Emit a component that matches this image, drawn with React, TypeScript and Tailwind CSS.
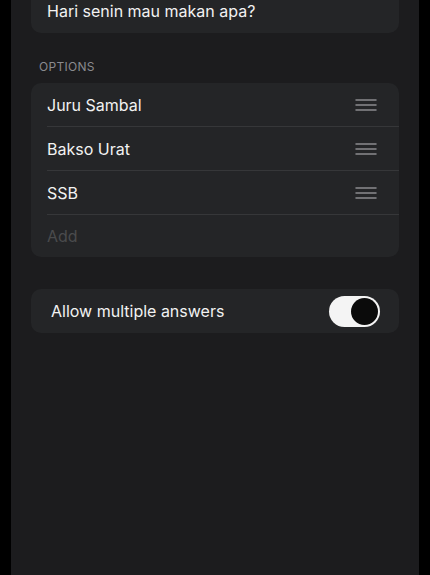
import React from 'react';

const options = ['Juru Sambal', 'Bakso Urat', 'SSB'];

const DragHandle = () => (
  <svg width="22" height="12" viewBox="0 0 22 12" className="shrink-0">
    <g stroke="#8a8a8e" strokeWidth="1.5" strokeLinecap="round">
      <line x1="1" y1="1" x2="21" y2="1" />
      <line x1="1" y1="6" x2="21" y2="6" />
      <line x1="1" y1="11" x2="21" y2="11" />
    </g>
  </svg>
);

export default function App() {
  return (
    <div
      className="h-[575px] w-[430px] overflow-hidden bg-black"
      style={{ fontFamily: 'Inter, "Noto Sans", sans-serif' }}
    >
      <div className="mx-[11px] h-full bg-[#1c1c1e] px-5 overflow-hidden">
        {/* Question */}
        <div className="-mt-[11px] flex h-[44px] items-center rounded-[10px] bg-[#242527] px-4">
          <span className="text-[16px] text-[#f2f2f2]">Hari senin mau makan apa?</span>
        </div>

        {/* Options */}
        <div className="mt-[26px] px-2 text-[12px] leading-4 tracking-wide text-[#8a8a8e]">OPTIONS</div>
        <div className="mt-[8px] rounded-[10px] bg-[#242527]">
          {options.map((o) => (
            <div key={o} className="ml-4 flex h-[44px] items-center border-b border-[#363739] pr-[22px]">
              <span className="flex-1 text-[16px] text-[#f2f2f2]">{o}</span>
              <DragHandle />
            </div>
          ))}
          <div className="flex h-[42px] items-center px-4">
            <span className="text-[16px] text-[#4a4b4d]">Add</span>
          </div>
        </div>

        {/* Toggle */}
        <div className="mt-[32px] flex h-[44px] items-center rounded-[10px] bg-[#242527] pl-5 pr-[19px]">
          <span className="flex-1 text-[16px] text-[#f2f2f2]">Allow multiple answers</span>
          <div className="flex h-[31px] w-[51px] items-center justify-end rounded-full bg-[#f4f4f4] p-[2px]">
            <div className="h-[27px] w-[27px] rounded-full bg-[#0b0b0b]" />
          </div>
        </div>
      </div>
    </div>
  );
}
